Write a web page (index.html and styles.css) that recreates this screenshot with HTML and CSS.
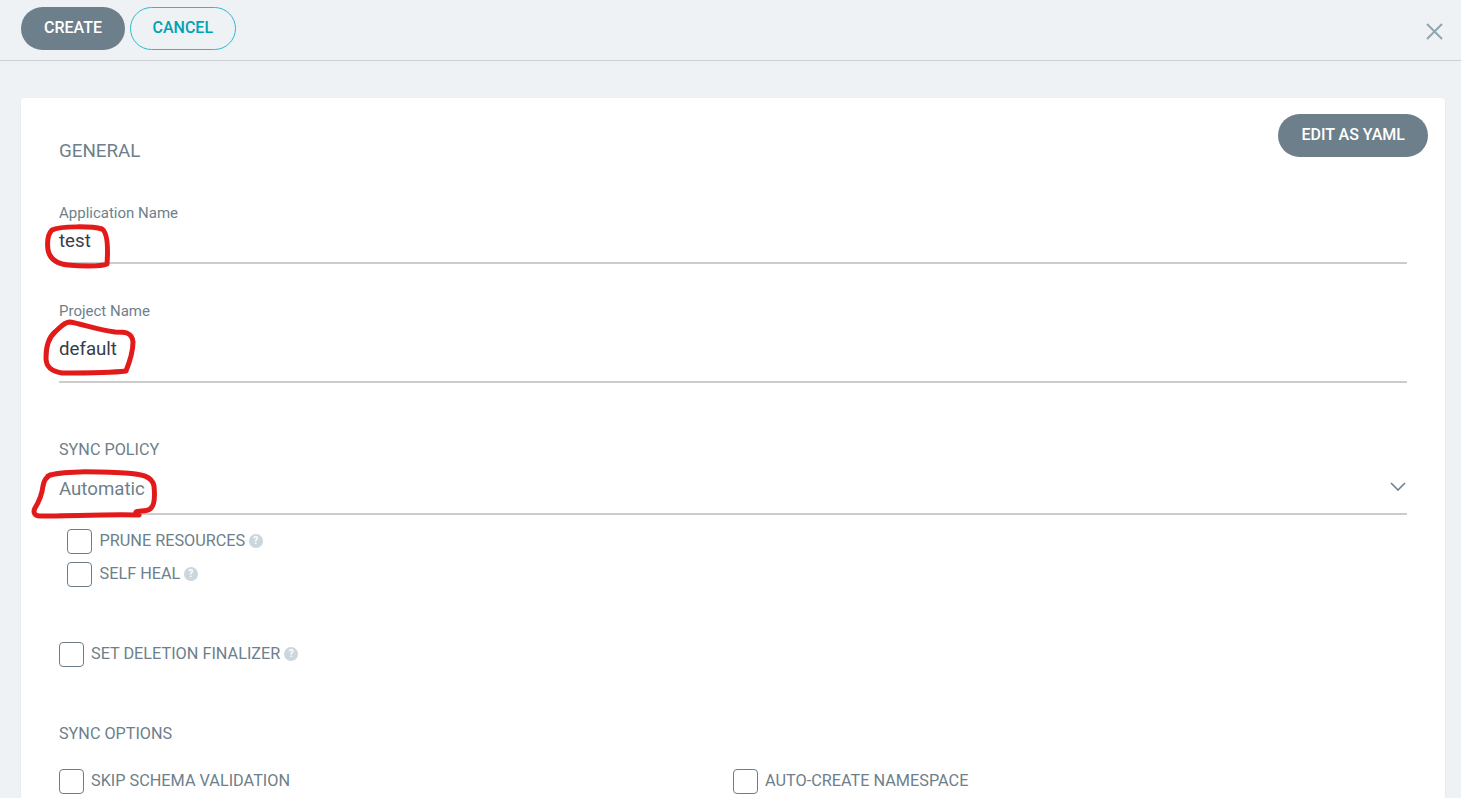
FILE: index.html
```html
<!DOCTYPE html>
<html lang="en">
<head>
<meta charset="utf-8">
<title>Create application</title>
<link rel="stylesheet" href="styles.css">
</head>
<body>
<header class="topbar">
  <div class="actions">
    <button class="btn btn-solid">CREATE</button>
    <button class="btn btn-outline">CANCEL</button>
  </div>
  <svg class="close" width="20" height="20" viewBox="0 0 20 20"><path d="M2 2 17 17M17 2 2 17"/></svg>
</header>
<main class="card">
  <button class="btn btn-solid btn-yaml">EDIT AS YAML</button>
  <h2 class="section-title">GENERAL</h2>
  <div class="field field-app">
    <label class="field-label">Application Name</label>
    <div class="field-value">test</div>
  </div>
  <div class="field field-project">
    <label class="field-label">Project Name</label>
    <div class="field-value value-tall">default</div>
  </div>
  <div class="field field-sync">
    <label class="group-label">SYNC POLICY</label>
    <div class="field-value select">
      <span>Automatic</span>
      <svg class="chevron" width="16" height="9" viewBox="0 0 16 9"><path d="M1 1 8 8 15 1"/></svg>
    </div>
  </div>
  <div class="nested-checks">
    <div class="check"><span class="box"></span><span class="check-text">PRUNE RESOURCES</span><span class="help">?</span></div>
    <div class="check"><span class="box"></span><span class="check-text">SELF HEAL</span><span class="help">?</span></div>
  </div>
  <div class="check check-finalizer"><span class="box"></span><span class="check-text">SET DELETION FINALIZER</span><span class="help">?</span></div>
  <div class="group-label group-options">SYNC OPTIONS</div>
  <div class="options-grid">
    <div class="check"><span class="box"></span><span class="check-text">SKIP SCHEMA VALIDATION</span></div>
    <div class="check"><span class="box"></span><span class="check-text">AUTO-CREATE NAMESPACE</span></div>
  </div>
</main>
<svg class="annotations" width="1461" height="798" viewBox="0 0 1461 798">
  <path d="M52 230C60 226 92 226 102 229C108 233 108 250 107 264C100 267 78 266 68 265C58 264 50 260 48 250C47 242 48 234 52 230Z"/>
  <path d="M70 322C82 324 98 330 115 332C125 332 132 332 133 342C133 352 128 366 126 371C110 373 85 373 62 373C50 371 46 366 46 358C46 346 48 338 55 332C60 327 65 322 70 322Z"/>
  <path d="M48 476C62 470 100 472 125 473C142 474 152 476 154 486C155 496 155 506 150 509C146 512 138 510 136 512L139 515C110 514 70 516 40 516C34 516 33 512 35 508C40 500 42 494 43 486C44 480 46 478 50 475"/>
</svg>
</body>
</html>
```
FILE: styles.css
```css
html, body {
  margin: 0;
  height: 798px;
  overflow: hidden;
}
body {
  position: relative;
  background: #eef2f5;
  font-family: Roboto, "Liberation Sans", sans-serif;
  color: #6d7f8b;
}
.topbar {
  box-sizing: border-box;
  height: 61px;
  padding: 7px 16px 0 21px;
  display: flex;
  justify-content: space-between;
  align-items: flex-start;
  border-bottom: 1px solid #ccd0d4;
}
.actions {
  display: flex;
  gap: 5px;
}
.btn {
  box-sizing: border-box;
  height: 43px;
  padding: 0 22px 2px;
  border-radius: 22px;
  font-family: inherit;
  font-size: 16px;
  font-weight: 500;
  border: 1px solid transparent;
}
.btn-solid {
  background: #6d7f8b;
  color: #fff;
}
.btn-outline {
  padding: 0 21.5px 2px;
  background: transparent;
  border-color: #28bcd0;
  color: #00a2b3;
}
.close {
  margin-top: 15px;
  fill: none;
  stroke: #8fa4b1;
  stroke-width: 2;
}
.card {
  position: relative;
  box-sizing: border-box;
  height: 700px;
  margin: 37px 16px 0 21px;
  padding: 43px 38px 0;
  background: #fff;
  border-radius: 4px 4px 0 0;
  box-shadow: 0 1px 2px rgba(0, 0, 0, 0.08);
}
.btn-yaml {
  position: absolute;
  top: 16px;
  right: 17px;
}
.section-title {
  margin: 0;
  font-size: 18.8px;
  line-height: 20px;
  font-weight: 400;
  color: #6d7f8b;
}
.field-label {
  display: block;
  font-size: 15px;
  line-height: 16px;
  color: #6d7f8b;
}
.group-label {
  display: block;
  font-size: 16.2px;
  line-height: 18px;
  color: #6d7f8b;
}
.field-app { margin-top: 44px; }
.field-project { margin-top: 39px; }
.field-sync { margin-top: 58px; }
.field-value {
  box-sizing: border-box;
  height: 43px;
  padding-top: 10px;
  font-size: 18.67px;
  line-height: 21px;
  color: #363c4a;
  border-bottom: 2px solid #cccccc;
}
.value-tall {
  height: 64px;
  padding-top: 20px;
}
.select {
  display: flex;
  justify-content: space-between;
  align-items: flex-start;
  height: 56px;
  padding-top: 20px;
  color: #6d7f8b;
}
.chevron {
  margin: 3px 1px 0 0;
  fill: none;
  stroke: #6d7f8b;
  stroke-width: 1.6;
}
.check {
  display: flex;
  align-items: center;
  height: 25px;
  font-size: 16.25px;
  color: #6d7f8b;
}
.box {
  box-sizing: border-box;
  width: 25px;
  height: 25px;
  margin-right: 7px;
  flex: none;
  border: 1px solid #6d7f8b;
  border-radius: 4px;
  background: #fff;
}
.check-text {
  margin-top: -3px;
}
.help {
  width: 14px;
  height: 14px;
  margin: -1px 0 0 4px;
  border-radius: 50%;
  background: #ccd6dd;
  color: #fff;
  font-size: 10px;
  font-weight: 700;
  line-height: 14px;
  text-align: center;
}
.nested-checks {
  display: flex;
  flex-direction: column;
  gap: 8px;
  margin: 14px 0 0 8px;
}
.nested-checks .box {
  margin-right: 7.5px;
}
.nested-checks .help {
  margin-left: 3.5px;
}
.check-finalizer { margin-top: 55px; }
.group-options { margin-top: 58px; }
.options-grid {
  display: grid;
  grid-template-columns: 674px 1fr;
  margin-top: 26px;
}
.annotations {
  position: absolute;
  left: 0;
  top: 0;
  fill: none;
  stroke: #e21a1a;
  stroke-width: 5;
  stroke-linecap: round;
  stroke-linejoin: round;
  pointer-events: none;
}
```
